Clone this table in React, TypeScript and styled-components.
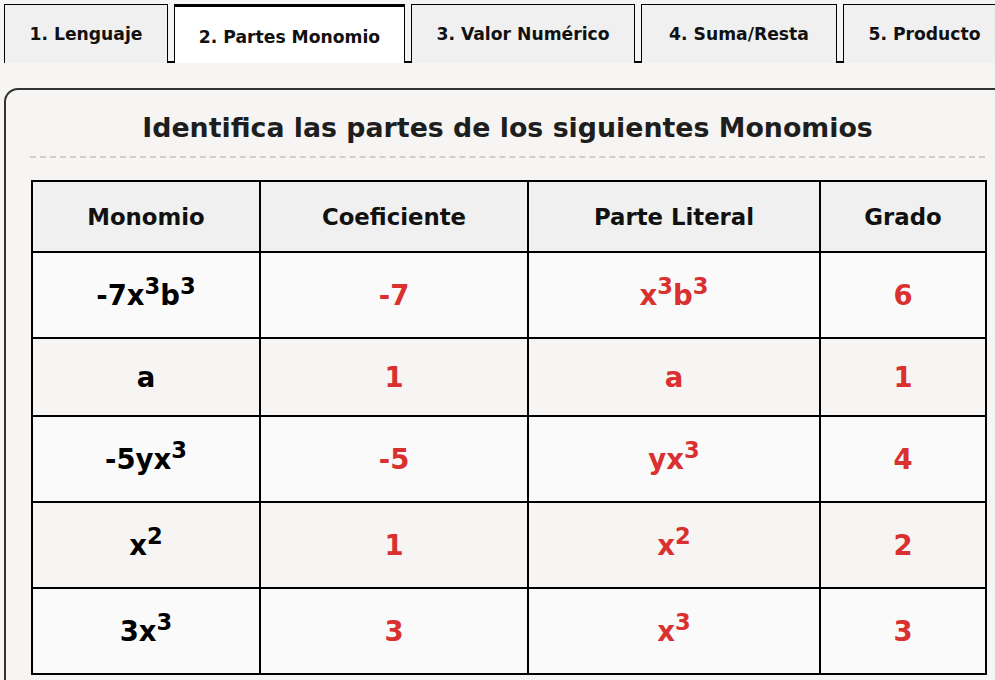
import React from "react";
import styled, { createGlobalStyle } from "styled-components";

const Global = createGlobalStyle`
  html, body { margin: 0; padding: 0; background: #f6f5f3; }
  body {
    font-family: "DejaVu Sans", Verdana, sans-serif;
    overflow: hidden;
    width: 995px;
    height: 680px;
  }
  #root { padding: 4px 0 0 4px; }
`;

const TabBar = styled.div`
  display: flex;
  gap: 6px;
  border-bottom: 2px solid #000;
  width: 1100px;
  height: 59px;
  box-sizing: border-box;
`;

const Tab = styled.div<{ $active?: boolean; $w: number }>`
  box-sizing: border-box;
  width: ${(p) => p.$w}px;
  height: 59px;
  display: flex;
  align-items: center;
  justify-content: center;
  padding: ${(p) => (p.$active ? "3px 0 0" : "0")};
  border: 1px solid #000;
  border-top: ${(p) => (p.$active ? "3px" : "1px")} solid #000;
  border-bottom: none;
  background: ${(p) => (p.$active ? "#ffffff" : "#f0f0f0")};
  font-weight: bold;
  font-size: 17.2px;
  color: #111;
  white-space: nowrap;
  flex-shrink: 0;
`;

const Card = styled.div`
  margin-top: 25px;
  width: 1007px;
  box-sizing: border-box;
  border: 2px solid #333;
  border-radius: 14px;
  background: #f6f5f3;
  padding: 20px 24px 20px 24px;
`;

const Title = styled.h2`
  margin: 0;
  text-align: center;
  font-size: 26.8px;
  font-weight: bold;
  color: #1e1e1e;
  width: 955px;
  padding-bottom: 10px;
  border-bottom: 2px dashed #cfcfcf;
  line-height: 36px;
`;

const Table = styled.table`
  margin-top: 22px;
  margin-left: 1px;
  border-collapse: collapse;
  width: 954px;
  table-layout: fixed;
  border: 2px solid #000;
`;

const Th = styled.th<{ $w: number }>`
  width: ${(p) => p.$w}px;
  height: 71px;
  box-sizing: border-box;
  border: 2px solid #000;
  background: #f0f0f0;
  font-size: 22.8px;
  font-weight: bold;
  color: #111;
  text-align: center;
  padding: 0;
`;

const Tr = styled.tr<{ $alt?: boolean }>`
  background: ${(p) => (p.$alt ? "#f6f5f3" : "#fafafa")};
`;

const Td = styled.td<{ $red?: boolean; $h: number }>`
  border: 2px solid #000;
  height: ${(p) => p.$h}px;
  box-sizing: border-box;
  text-align: center;
  font-size: 27.5px;
  font-weight: bold;
  color: ${(p) => (p.$red ? "#d93030" : "#000")};
  padding: 0;
  sup {
    font-size: 0.82em;
    line-height: 0;
    vertical-align: 0.5em;
  }
`;

type Row = { m: React.ReactNode; c: React.ReactNode; l: React.ReactNode; g: string; h: number };

const rows: Row[] = [
  { m: <>-7x<sup>3</sup>b<sup>3</sup></>, c: "-7", l: <>x<sup>3</sup>b<sup>3</sup></>, g: "6", h: 86 },
  { m: "a", c: "1", l: "a", g: "1", h: 78 },
  { m: <>-5yx<sup>3</sup></>, c: "-5", l: <>yx<sup>3</sup></>, g: "4", h: 86 },
  { m: <>x<sup>2</sup></>, c: "1", l: <>x<sup>2</sup></>, g: "2", h: 86 },
  { m: <>3x<sup>3</sup></>, c: "3", l: <>x<sup>3</sup></>, g: "3", h: 86 },
];

const tabs = [
  { t: "1. Lenguaje", w: 164 },
  { t: "2. Partes Monomio", w: 231 },
  { t: "3. Valor Numérico", w: 224 },
  { t: "4. Suma/Resta", w: 196 },
  { t: "5. Producto", w: 163 },
];

export default function App() {
  return (
    <>
      <Global />
      <TabBar>
        {tabs.map((t, i) => (
          <Tab key={t.t} $active={i === 1} $w={t.w}>
            {t.t}
          </Tab>
        ))}
      </TabBar>
      <Card>
        <Title>Identifica las partes de los siguientes Monomios</Title>
        <Table>
          <thead>
            <tr>
              <Th $w={228}>Monomio</Th>
              <Th $w={268}>Coeficiente</Th>
              <Th $w={292}>Parte Literal</Th>
              <Th $w={166}>Grado</Th>
            </tr>
          </thead>
          <tbody>
            {rows.map((r, i) => (
              <Tr key={i} $alt={i % 2 === 1}>
                <Td $h={r.h}>{r.m}</Td>
                <Td $h={r.h} $red>{r.c}</Td>
                <Td $h={r.h} $red>{r.l}</Td>
                <Td $h={r.h} $red>{r.g}</Td>
              </Tr>
            ))}
          </tbody>
        </Table>
      </Card>
    </>
  );
}
